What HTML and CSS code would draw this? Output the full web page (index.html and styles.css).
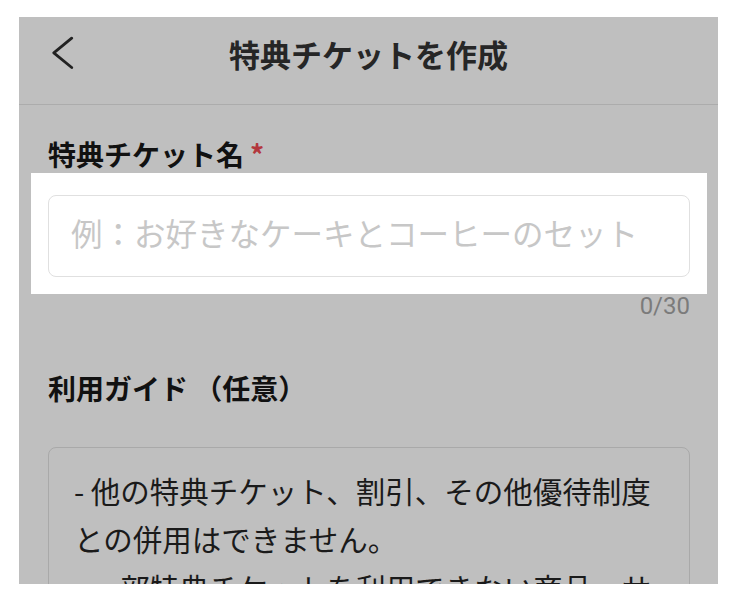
FILE: index.html
```html
<!DOCTYPE html>
<html lang="ja">
<head>
<meta charset="utf-8">
<title>特典チケットを作成</title>
<link rel="stylesheet" href="styles.css">
</head>
<body>
<div class="screen">
  <header class="header">
    <div class="back">
      <svg width="22" height="34" viewBox="0 0 22 34" aria-hidden="true"><polyline points="19.7,2.2 1.8,16.8 19.7,31.5" fill="none" stroke="#222" stroke-width="2.8" stroke-linecap="round" stroke-linejoin="round"/></svg>
    </div>
    <h1 class="title">特典チケットを作成</h1>
    <div></div>
  </header>
  <main class="body">
    <div class="label first">特典チケット名<span class="req">*</span></div>
    <div class="spot">
      <div class="input"><span class="placeholder">例：お好きなケーキとコーヒーのセット</span></div>
    </div>
    <div class="counter">0/30</div>
    <div class="label second">利用ガイド （任意）</div>
    <div class="textarea">
      <p class="line">- 他の特典チケット、割引、その他優待制度との併用はできません。</p>
      <p class="line">- 一部特典チケットを利用できない商品・サービスがあります。</p>
    </div>
  </main>
</div>
</body>
</html>
```

FILE: styles.css
```css
html, body {
  margin: 0;
  padding: 0;
  background: #ffffff;
}

body {
  font-family: "Noto Sans CJK JP", "Noto Sans", sans-serif;
}

.screen {
  margin: 17px 20px 0 19px;
  width: 699px;
  height: 567px;
  background: #bfbfbf;
  overflow: hidden;
}

.header {
  box-sizing: border-box;
  height: 88px;
  border-bottom: 1px solid #acacac;
  display: grid;
  grid-template-columns: 1fr auto 1fr;
  align-items: start;
}

.back {
  padding: 19px 0 0 33px;
  line-height: 0;
}

.title {
  margin: 21px 0 0;
  font-size: 31px;
  line-height: 31px;
  font-weight: 700;
  color: #262626;
  white-space: nowrap;
}

.body {
  padding: 0 28px 0 29px;
}

.label {
  font-size: 28px;
  line-height: 28px;
  font-weight: 700;
  color: #111111;
}

.label.first {
  margin-top: 35px;
}

.label.second {
  margin-top: 56px;
}

.req {
  color: #b3373d;
  margin-left: 6px;
}

.spot {
  margin: 5px -17px 0;
  padding: 22px 17px 17px;
  background: #ffffff;
}

.input {
  box-sizing: border-box;
  height: 82px;
  border: 1px solid #e0e0e0;
  border-radius: 8px;
  padding: 0 20px 8px 22px;
  display: flex;
  align-items: center;
}

.placeholder {
  font-size: 31.5px;
  color: #c7c7c7;
  white-space: nowrap;
}

.counter {
  font-family: Roboto, "Liberation Sans", sans-serif;
  font-size: 24px;
  line-height: 24px;
  color: #7b7b7b;
  text-align: right;
}

.textarea {
  margin-top: 45px;
  height: 200px;
  border: 1px solid #a9a9a9;
  border-radius: 8px;
  padding: 17.5px 23px 0 25px;
}

.line {
  margin: 0;
  font-size: 29.5px;
  line-height: 48.5px;
  color: #1a1a1a;
}
```
